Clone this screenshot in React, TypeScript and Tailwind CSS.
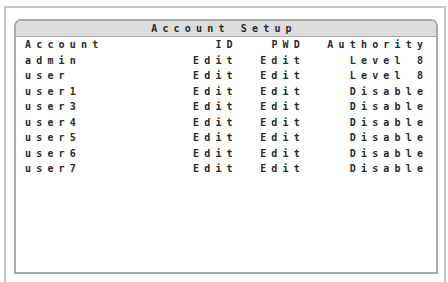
const rows = [
  { name: "admin", auth: "Level 8" },
  { name: "user", auth: "Level 8" },
  { name: "user1", auth: "Disable" },
  { name: "user3", auth: "Disable" },
  { name: "user4", auth: "Disable" },
  { name: "user5", auth: "Disable" },
  { name: "user6", auth: "Disable" },
  { name: "user7", auth: "Disable" },
];

const mono = { fontFamily: '"DejaVu Sans Mono", "Liberation Mono", monospace' };

export default function App() {
  return (
    <div className="h-[282px] w-[448px] overflow-hidden bg-white">
      {/* outer frame */}
      <div className="ml-[4px] mt-[6px] h-[300px] w-[442px] border-2 border-[#c6c6c6] pl-[8px] pt-[11px]">
        {/* setup panel */}
        <div
          className="h-[255px] w-[424px] rounded-t-[7px] border-2 border-[#a9a9a9] text-[10px] font-bold tracking-[5.18px] text-[#2a2a2a]"
          style={mono}
        >
          <div className="flex h-[16px] items-center justify-center rounded-t-[5px] border-b border-[#a9a9a9] bg-[#dcdcdc] pr-[4px] leading-none">
            Account Setup
          </div>
          <div className="pl-[9px]">
            <div className="grid h-[16px] grid-cols-[168px_44.8px_67.2px_123.2px] items-center leading-none">
              <span>Account</span>
              <span className="text-right">ID</span>
              <span className="text-right">PWD</span>
              <span className="text-right">Authority</span>
            </div>
            {rows.map((r) => (
              <div
                key={r.name}
                className="grid h-[15.5px] grid-cols-[168px_44.8px_67.2px_123.2px] items-center leading-none"
              >
                <span>{r.name}</span>
                <span className="text-right">Edit</span>
                <span className="text-right">Edit</span>
                <span className="whitespace-pre text-right">{r.auth}</span>
              </div>
            ))}
          </div>
        </div>
      </div>
    </div>
  );
}
